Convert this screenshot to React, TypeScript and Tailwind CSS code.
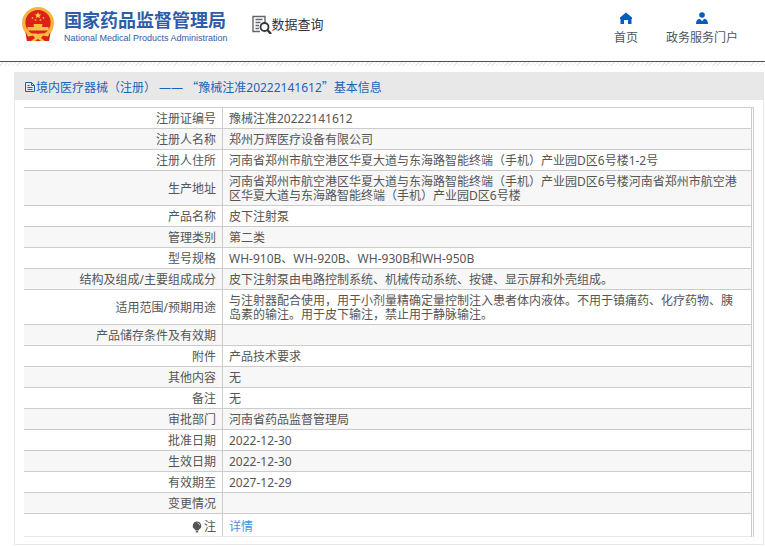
import React from "react";

interface RecordRow {
  label: string;
  value: string;
}

const rows: RecordRow[] = [
  { label: "注册证编号", value: "豫械注准20222141612" },
  { label: "注册人名称", value: "郑州万辉医疗设备有限公司" },
  {
    label: "注册人住所",
    value:
      "河南省郑州市航空港区华夏大道与东海路智能终端（手机）产业园D区6号楼1-2号",
  },
  {
    label: "生产地址",
    value:
      "河南省郑州市航空港区华夏大道与东海路智能终端（手机）产业园D区6号楼河南省郑州市航空港区华夏大道与东海路智能终端（手机）产业园D区6号楼",
  },
  { label: "产品名称", value: "皮下注射泵" },
  { label: "管理类别", value: "第二类" },
  { label: "型号规格", value: "WH-910B、WH-920B、WH-930B和WH-950B" },
  {
    label: "结构及组成/主要组成成分",
    value: "皮下注射泵由电路控制系统、机械传动系统、按键、显示屏和外壳组成。",
  },
  {
    label: "适用范围/预期用途",
    value:
      "与注射器配合使用，用于小剂量精确定量控制注入患者体内液体。不用于镇痛药、化疗药物、胰岛素的输注。用于皮下输注，禁止用于静脉输注。",
  },
  { label: "产品储存条件及有效期", value: "" },
  { label: "附件", value: "产品技术要求" },
  { label: "其他内容", value: "无" },
  { label: "备注", value: "无" },
  { label: "审批部门", value: "河南省药品监督管理局" },
  { label: "批准日期", value: "2022-12-30" },
  { label: "生效日期", value: "2022-12-30" },
  { label: "有效期至", value: "2027-12-29" },
  { label: "变更情况", value: "" },
];

const Emblem: React.FC = () => (
  <svg viewBox="0 0 32 34" className="h-[34px] w-8 shrink-0" aria-hidden="true">
    <path d="m4 24 1 10h22l1-10Z" fill="#d8261c" />
    <circle cx="16" cy="16" r="16" fill="#f3b53c" />
    <circle cx="16" cy="15.500" r="12.600" fill="#dd2018" />
    <path
      d="m16 5 .9 2.3 2.5.1-2 1.5.8 2.4-2.2-1.4-2.2 1.4.8-2.4-2-1.5 2.5-.1Z"
      fill="#f9cf4a"
    />
    <g fill="#f3a83a">
      <circle cx="10.5" cy="11" r=".9" />
      <circle cx="13.5" cy="13" r=".9" />
      <circle cx="18.5" cy="13" r=".9" />
      <circle cx="21.5" cy="11" r=".9" />
    </g>
    <path d="M12 17h8l1 1.500h-1V20h6.500v3.500h-21V20H12v-1.500h-1Z" fill="#f6c044" />
    <path d="M3.500 25.500 5 34h22l1.500-8.500L23 28H9Z" fill="#dd2018" />
    <path
      d="M4 25.500c4 2.500 8 0 12 1.500 4-1.500 8 1 12-1.500l-2 4-5-1-2 2.500 4 3h-4l-3-2-3 2H9l4-3-2-2.500-5 1Z"
      fill="#f6c044"
    />
  </svg>
);

const SearchDocIcon: React.FC = () => (
  <svg
    viewBox="0 0 20 20"
    className="size-5 shrink-0"
    fill="none"
    stroke="#33343c"
    aria-hidden="true"
  >
    <path d="M8 17.500H1V2.500h12V8" stroke="#62646c" strokeWidth="1.400" />
    <path
      d="M3.500 5.500h7M3.500 8.500h5M3.500 11.500h3.500M3.500 14.500H7"
      stroke="#62646c"
      strokeWidth="1.300"
    />
    <circle cx="12.500" cy="13" r="4" strokeWidth="1.800" />
    <path d="m15.500 16 3.500 4" strokeWidth="2.400" />
  </svg>
);

const HomeIcon: React.FC = () => (
  <svg viewBox="0 0 12 12" className="size-3" fill="#0b5bbd" aria-hidden="true">
    <path d="M6 .5 0 5.500V7h.5v5H4V8h4v4h3.500V7h.5V5.500Z" />
  </svg>
);

const UserIcon: React.FC = () => (
  <svg viewBox="0 0 12 12" className="size-3" fill="#0b5bbd" aria-hidden="true">
    <circle cx="6" cy="3" r="2.800" />
    <path d="M0 12c0-3 1.300-5 3.800-5.200L6 9.300l2.200-2.500C10.700 7 12 9 12 12Z" />
  </svg>
);

const FileIcon: React.FC = () => (
  <svg
    viewBox="0 0 12 12"
    className="size-3 shrink-0"
    fill="none"
    stroke="#1a64b8"
    aria-hidden="true"
  >
    <path d="M1.500 1.500h6l3 3v6h-9ZM7.500 1.500v3h3M3.500 4.500h2M3.500 6.500h5M3.500 8.500h5" />
  </svg>
);

const BulbIcon: React.FC = () => (
  <svg viewBox="0 0 10 12" className="h-3 w-2.5" aria-hidden="true">
    <path
      d="M5 .5a4.200 4.200 0 0 0-2.500 7.600L3.500 9.500h3l1-1.400A4.200 4.200 0 0 0 5 .5Z"
      fill="#555"
    />
    <path d="M3.800 10h2.400v1.500H3.800Z" fill="#666" />
    <path d="M5.500 2c1.200.2 2 1 2 2.200" stroke="#ddd" fill="none" />
  </svg>
);

const Header: React.FC = () => (
  <header>
    <div className="flex h-[62px] items-start justify-between border-b border-[#1d5c92] pr-[27px] pl-[22px]">
      <div className="flex pt-[7px]">
        <Emblem />
        <div className="ml-2.5 font-['Noto_Sans_CJK_SC',sans-serif] text-[#2f5ca8]">
          <h1 className="text-lg leading-6 font-bold whitespace-nowrap">
            国家药品监督管理局
          </h1>
          <p className="font-['Liberation_Sans',sans-serif] text-[9px] leading-[14px] whitespace-nowrap">
            National Medical Products Administration
          </p>
        </div>
        <div className="ml-6 flex items-center self-start pt-[7px] text-[#33343c]">
          <SearchDocIcon />
          <span className="text-[13px] leading-5 whitespace-nowrap">
            数据查询
          </span>
        </div>
      </div>
      <nav className="flex gap-7 pt-3 text-xs leading-4 whitespace-nowrap text-[#555]">
        <a href="#home" className="flex flex-col items-center gap-1.5">
          <HomeIcon />
          首页
        </a>
        <a href="#portal" className="flex flex-col items-center gap-1.5">
          <UserIcon />
          政务服务门户
        </a>
      </nav>
    </div>
    <div className="h-1 bg-[repeating-linear-gradient(135deg,#fff_0px,#fff_2px,#e6eaee_2px,#e6eaee_3px)]" />
  </header>
);

const App: React.FC = () => {
  return (
    <div
      lang="zh-CN"
      className="bg-white font-['Noto_Sans','Noto_Sans_CJK_SC',sans-serif] text-xs text-[#555]"
    >
      <Header />

      <main className="mt-1.5 mr-px ml-3.5 border border-t-0 border-[#e8e8e8]">
        <h2 className="flex h-7 items-center bg-[#e8e8e8] pt-0.5 pl-[9px] text-[#1a64b8]">
          <FileIcon />
          <span>
            境内医疗器械（注册） ——{" "}
            <span className="font-['Noto_Sans_CJK_SC',sans-serif]">“</span>
            豫械注准20222141612
            <span className="font-['Noto_Sans_CJK_SC',sans-serif]">”</span>
            基本信息
          </span>
        </h2>

        <div className="px-[9px] pt-[7px] pb-[7px]">
          <table className="w-full border-separate border-spacing-0 border-t border-r-3 border-t-[#ccc] border-r-[#ccc] [border-right-style:double]">
            <tbody>
              {rows.map((row) => (
                <tr key={row.label} className="even:bg-[#f7f7f7]">
                  <th
                    scope="row"
                    className="w-[199px] border-r border-b border-[#ccc] pt-1 pr-1.5 pb-0.5 text-right leading-[14px] font-normal"
                  >
                    {row.label}
                  </th>
                  <td className="h-[21px] border-b border-[#ccc] pt-1 pr-3 pb-0.5 pl-1.5 leading-[14px]">
                    {row.value}
                  </td>
                </tr>
              ))}
              <tr>
                <th
                  scope="row"
                  className="border-r border-b border-r-[#ccc] border-b-[#e8e8e8] pt-1.5 pr-1.5 pb-0.5 font-normal"
                >
                  <span className="flex items-center justify-end gap-0.5 leading-[14px]">
                    <BulbIcon />注
                  </span>
                </th>
                <td className="border-b border-[#e8e8e8] pt-1.5 pb-0.5 pl-1.5 leading-[14px]">
                  <a href="#detail" className="text-[#4593e0]">
                    详情
                  </a>
                </td>
              </tr>
            </tbody>
          </table>
        </div>
      </main>
    </div>
  );
};

export default App;
